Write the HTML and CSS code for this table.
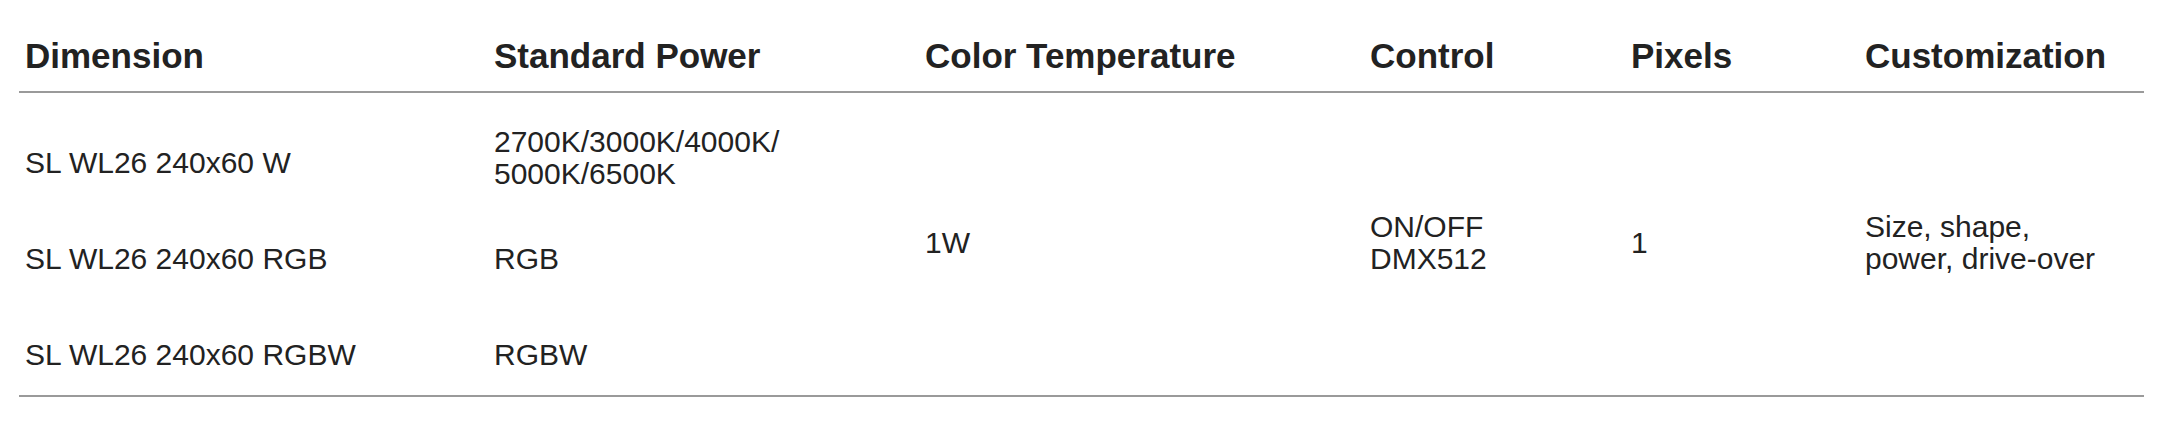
FILE: index.html
```html
<!DOCTYPE html>
<html>
<head>
<meta charset="utf-8">
<link rel="stylesheet" href="styles.css">
</head>
<body>
<table class="spec">
  <colgroup>
    <col class="c1"><col class="c2"><col class="c3"><col class="c4"><col class="c5"><col class="c6">
  </colgroup>
  <thead>
    <tr>
      <th>Dimension</th>
      <th>Standard Power</th>
      <th>Color Temperature</th>
      <th>Control</th>
      <th>Pixels</th>
      <th>Customization</th>
    </tr>
  </thead>
  <tbody>
    <tr class="r1">
      <td class="dim-first">SL WL26 240x60 W</td>
      <td>2700K/3000K/4000K/<br>5000K/6500K</td>
      <td rowspan="3" class="merged">1W</td>
      <td rowspan="3" class="merged">ON/OFF<br>DMX512</td>
      <td rowspan="3" class="merged">1</td>
      <td rowspan="3" class="merged">Size, shape,<br>power, drive-over</td>
    </tr>
    <tr class="r2">
      <td>SL WL26 240x60 RGB</td>
      <td>RGB</td>
    </tr>
    <tr class="r3">
      <td>SL WL26 240x60 RGBW</td>
      <td>RGBW</td>
    </tr>
  </tbody>
</table>
</body>
</html>
```
FILE: styles.css
```css
html, body {
  margin: 0;
  padding: 0;
  background: #ffffff;
}
body {
  padding: 0 26px 0 19px;
  font-family: "Liberation Sans", Arial, sans-serif;
  color: #222222;
}
.spec {
  width: 100%;
  border-collapse: collapse;
  table-layout: fixed;
}
.c1 { width: 469px; }
.c2 { width: 431px; }
.c3 { width: 445px; }
.c4 { width: 261px; }
.c5 { width: 234px; }
.c6 { width: auto; }
.spec th {
  text-align: left;
  font-weight: bold;
  font-size: 35px;
  line-height: 40px;
  padding: 36px 6px 15px 6px;
  border-bottom: 2px solid #9a9a9a;
  white-space: nowrap;
}
.spec td {
  text-align: left;
  vertical-align: middle;
  font-size: 30px;
  line-height: 32px;
  padding: 29px 6px;
  white-space: nowrap;
}
.spec tr.r1 td {
  padding-top: 33px;
  padding-bottom: 24px;
}
.spec tr.r1 td.dim-first {
  padding-top: 43px;
}
.spec tr.r2 td {
  padding-top: 29px;
  padding-bottom: 32px;
}
.spec tr.r3 td {
  padding-top: 32px;
  padding-bottom: 24px;
}
.spec tr.r1 td.merged {
  padding-top: 28px;
  padding-bottom: 30px;
}
.spec tr.r3 td,
.spec td.merged {
  border-bottom: 2px solid #9a9a9a;
}
```
